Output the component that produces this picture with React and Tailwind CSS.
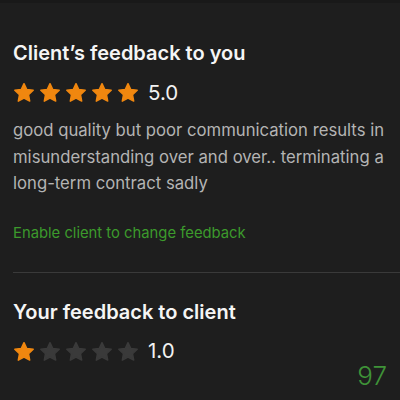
import React from 'react';

const STAR_PATH =
  'M12 1.8l3.05 6.4 7 .85-5.15 4.85 1.33 6.95L12 17.45l-6.23 3.4 1.33-6.95L1.95 9.05l7-.85z';

function Star({ filled }) {
  return (
    <svg viewBox="0 0 24 24" className="w-[22px] h-[22px]">
      <path
        d={STAR_PATH}
        fill={filled ? '#f0870f' : '#3a3a3a'}
        stroke={filled ? '#f0870f' : '#3a3a3a'}
        strokeWidth="1.6"
        strokeLinejoin="round"
      />
    </svg>
  );
}

function Rating({ value }) {
  return (
    <div className="flex items-center">
      <div className="flex gap-[4px]">
        {[1, 2, 3, 4, 5].map((n) => (
          <Star key={n} filled={n <= value} />
        ))}
      </div>
      <span className="ml-[9px] text-[20.5px] text-[#f2f2f2] leading-none">
        {value.toFixed(1)}
      </span>
    </div>
  );
}

export default function App() {
  return (
    <div
      className="relative w-[400px] h-[400px] overflow-hidden bg-[#1e1e1e]"
      style={{ fontFamily: 'Inter, "Liberation Sans", sans-serif' }}
    >
      <div className="h-[3px] bg-[#191919]" />

      <div className="pl-[13px] pt-[36px]">
        {/* client's review */}
        <div className="pr-[10px]">
          <h2 className="text-[20px] font-semibold text-[#f5f5f5] leading-[28px]">
            Client’s feedback to you
          </h2>
          <div className="mt-[15px]">
            <Rating value={5} />
          </div>
          <p className="mt-[13px] text-[16.7px] leading-[26.5px] text-[#b4b4b4]">
            good quality but poor communication results in misunderstanding over and
            over.. terminating a long-term contract sadly
          </p>
          <button className="mt-[26px] text-[14.8px] text-[#3c9a2c] leading-[20px]">
            Enable client to change feedback
          </button>
        </div>

        <div className="mt-[28px] h-px bg-[#3a3a3a]" />

        {/* my review */}
        <div className="pr-[13px] pt-[25px]">
          <h2 className="text-[20px] font-semibold text-[#f5f5f5] leading-[28px]">
            Your feedback to client
          </h2>
          <div className="mt-[15px]">
            <Rating value={1} />
          </div>
        </div>
      </div>

      <span className="absolute right-[13px] bottom-[11px] text-[26px] font-light text-[#3f9338] leading-none">
        97
      </span>
    </div>
  );
}
